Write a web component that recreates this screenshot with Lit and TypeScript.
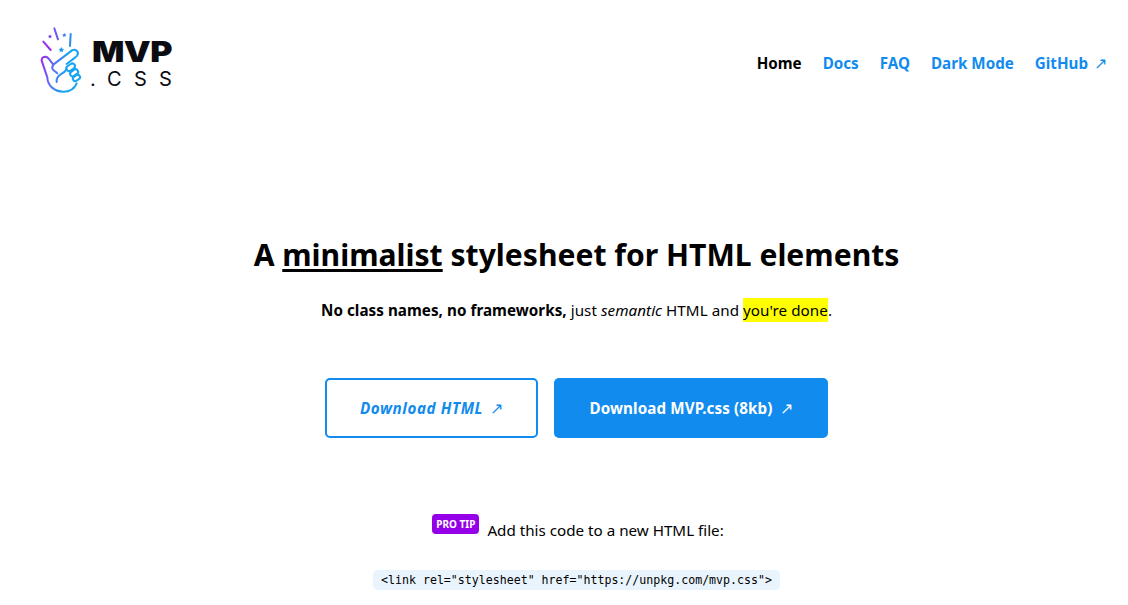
import { LitElement, html, css } from "lit";
import { customElement } from "lit/decorators.js";

@customElement("app-root")
export class AppRoot extends LitElement {
  static styles = css`
    :host { display: block; height: 605px; overflow: hidden; background: #fff; color: #000; font-family: "Noto Sans", "Open Sans", sans-serif; font-size: 15.2px; }
    nav { display: flex; justify-content: space-between; align-items: center; padding: 24px 21px 0 38px; height: 72px; }
    .logo { display: flex; align-items: center; gap: 4px; }
    .logo svg { display: block; width: 48px; height: 72px; }
    .wordmark { display: flex; flex-direction: column; margin-top: 8px; color: #0b0b12; }
    .mvp { display: block; font-family: Inter, sans-serif; font-weight: 900; font-size: 29px; line-height: 26px; letter-spacing: -0.5px; margin-left: 2px; transform: scaleX(1.17); transform-origin: left center; }
    .css { font-family: Inter, sans-serif; font-weight: 400; font-size: 20px; line-height: 21px; letter-spacing: 12.2px; margin-top: 4px; white-space: nowrap; width: 82px; }
    ul { display: flex; gap: 21px; list-style: none; margin: 6px 0 0; padding: 0; font-weight: 700; }
    a { color: #118bee; text-decoration: none; }
    li.cur { color: #000; }
    .hero { display: flex; flex-direction: column; align-items: center; text-align: center; padding-left: 25px; }
    h1 { margin: 135px 0 0; font-size: 30.1px; line-height: 48px; font-weight: 700; }
    h1 u { text-underline-offset: 3px; }
    .sub { margin: 20px 0 0; line-height: 22px; font-size: 15.2px; letter-spacing: 0.05px; }
    mark { background: #ff0; color: #000; padding: 2px 0; }
    .btns { display: flex; gap: 16px; margin-top: 57px; }
    .btn { display: flex; align-items: center; justify-content: center; height: 60px; box-sizing: border-box; border-radius: 5px; font-weight: 700; font-size: 15.2px; border: 2px solid #118bee; }
    .outline { width: 213px; color: #118bee; font-style: italic; background: #fff; letter-spacing: 0.6px; }
    .solid { width: 274px; background: #118bee; color: #fff; letter-spacing: 0.1px; }
    .arrow { display: inline-block; line-height: 0; font-weight: 400; font-style: normal; font-size: 16px; margin-left: 7px; letter-spacing: 0; }
    .nav-arrow { margin-left: 2px; }
    .tip { display: flex; align-items: flex-start; justify-content: center; margin-top: 76px; padding-left: 3px; line-height: 24px; }
    .tag { background: #9500e8; color: #fff; font-size: 10px; font-weight: 700; border-radius: 4px; padding: 0 4px; height: 20px; line-height: 20px; margin-right: 8px; }
    .tiptext { margin-top: 4px; }
    code { display: block; margin-top: 28px; background: #e9f4fd; border-radius: 5px; padding: 0 8px; height: 20px; line-height: 20px; font-family: "DejaVu Sans Mono", monospace; font-size: 11.6px; color: #000; }
  `;

  render() {
    return html`
      <nav>
        <div class="logo">
          <svg viewBox="0 0 144 216" fill="none">
            <defs>
              <linearGradient id="g" gradientUnits="userSpaceOnUse" x1="8" y1="120" x2="85" y2="135">
                <stop offset="0" stop-color="#9b2cf0" />
                <stop offset="0.5" stop-color="#5a70f5" />
                <stop offset="1" stop-color="#14a4f2" />
              </linearGradient>
            </defs>
            <g stroke="url(#g)" stroke-width="6" stroke-linecap="round" stroke-linejoin="round">
              <path d="M22 98 C13 98 9 105 12 113 L28 160 C28 185 50 203 76 203 C96 203 110 193 116 178" />
              <path d="M22 98 C26 98 29 100 32 104 L46 122 L102 79 C112 73 124 84 118 94 C116 98 112 100 108 103 L86 120" />
              <path d="M46 122 C42 128 42 134 46 138 L58 148" />
              <path d="M56 174 C55 164 60 156 68 151 C74 148 82 142 86 136" />
              <rect x="84" y="122" width="28" height="16" rx="8" transform="rotate(-35 98 130)" />
              <rect x="95" y="139" width="26" height="15" rx="7.5" transform="rotate(-35 108 146)" />
              <rect x="104" y="155" width="23" height="14" rx="7" transform="rotate(-35 115 162)" />
            </g>
            <g stroke-width="6" stroke-linecap="round">
              <path d="M16 53 L38 78" stroke="#9b2cf0" />
              <path d="M49 13 L60 46" stroke="#6a5cf2" />
              <path d="M98 30 L96 66" stroke="#2a8cf2" />
            </g>
            <path d="M36 31 l2 4 4.5 .6 -3.2 3 .8 4.4 -4.1 -2.2 -4.1 2.2 .8 -4.4 -3.2 -3 4.5 -.6z" fill="#7b3cf0" />
            <path d="M79 27 l2 4 4.5 .6 -3.2 3 .8 4.4 -4.1 -2.2 -4.1 2.2 .8 -4.4 -3.2 -3 4.5 -.6z" fill="#3f78f2" />
            <path d="M70 69 l2.6 5.2 5.8 .8 -4.2 4 1 5.8 -5.2 -2.8 -5.2 2.8 1 -5.8 -4.2 -4 5.8 -.8z" fill="#1a96ef" />
          </svg>
          <div class="wordmark"><span class="mvp">MVP</span><span class="css">.CSS</span></div>
        </div>
        <ul>
          <li class="cur">Home</li>
          <li><a href="#">Docs</a></li>
          <li><a href="#">FAQ</a></li>
          <li><a href="#">Dark Mode</a></li>
          <li><a href="#">GitHub <span class="arrow nav-arrow">↗</span></a></li>
        </ul>
      </nav>
      <section class="hero">
        <h1>A <u>minimalist</u> stylesheet for HTML elements</h1>
        <p class="sub"><b>No class names, no frameworks,</b> just <i>semantic</i> HTML and <mark>you're done</mark>.</p>
        <div class="btns">
          <a class="btn outline" href="#">Download HTML <span class="arrow">↗</span></a>
          <a class="btn solid" href="#">Download MVP.css (8kb) <span class="arrow">↗</span></a>
        </div>
        <div class="tip"><span class="tag">PRO TIP</span><span class="tiptext">Add this code to a new HTML file:</span></div>
        <code>&lt;link rel="stylesheet" href="https://unpkg.com/mvp.css"&gt;</code>
      </section>
    `;
  }
}
